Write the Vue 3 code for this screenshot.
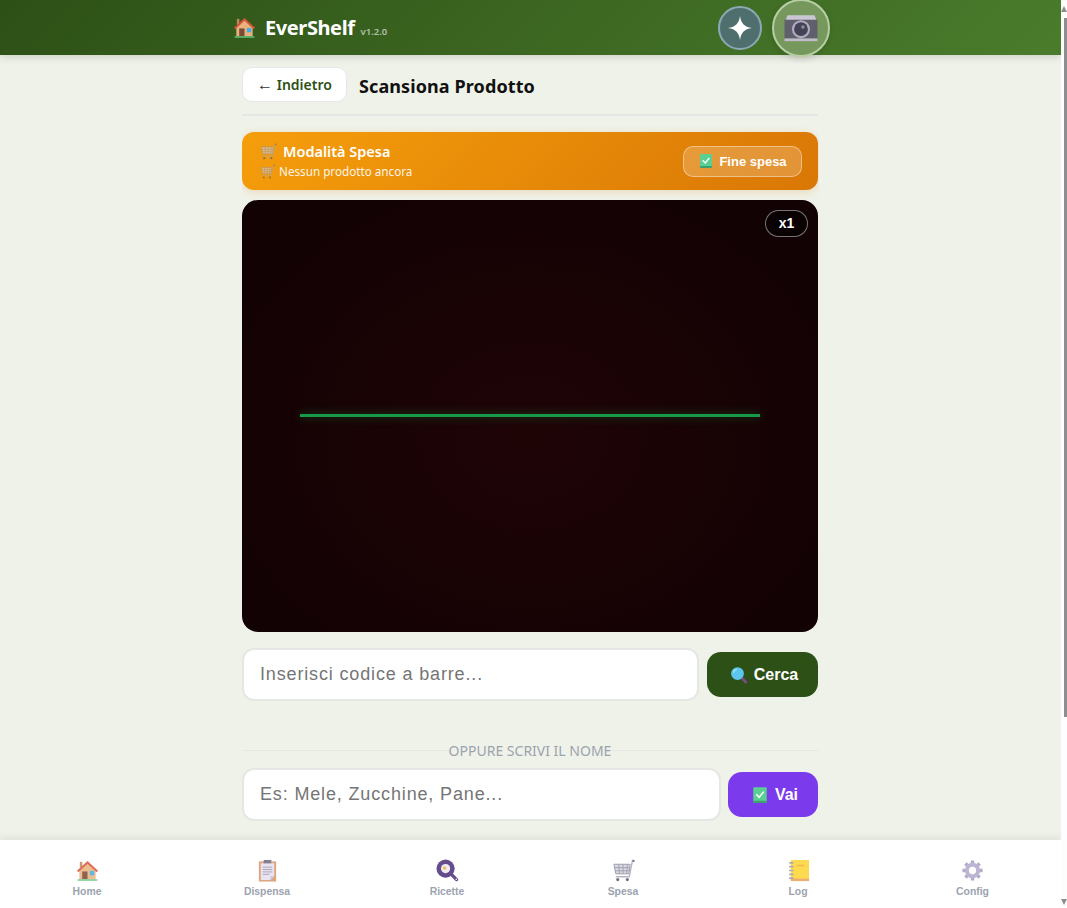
<template>
  <div class="shell">
    <!-- icon sprite -->
    <svg class="sprite" aria-hidden="true">
      <symbol id="i-house" viewBox="0 0 24 24">
        <rect x="4" y="3" width="2.6" height="6" fill="#b98a5e" />
        <path d="M3.500 11.500 12 4l8.500 7.500V21h-17z" fill="#e8b27c" />
        <path d="M1 12.200 12 2l11 10.200-1.500 1.500L12 5 2.500 13.700z" fill="#d9553a" />
        <rect x="6.500" y="13" width="5.500" height="8" fill="#7a4a35" />
        <rect x="14.500" y="12.500" width="4.500" height="4.500" fill="#45a9e6" />
        <rect x="1.500" y="21" width="21" height="1.600" rx=".8" fill="#5cc27a" />
      </symbol>
      <symbol id="i-cart" viewBox="0 0 24 24">
        <path d="M2 5.500h17l-1.400 10H4z" fill="#d3d3dc" stroke="#8d8da0" stroke-width="1" />
        <path d="M2.500 9h16M3 12.300h15M7 5.500 7.800 15.500M11.500 5.500v10M16 5.500l-.8 10" stroke="#8d8da0" stroke-width=".9" fill="none" />
        <path d="M23 1.500h-1.600L18 18.500H4" stroke="#a9a9b8" stroke-width="1.400" fill="none" />
        <rect x="21.500" y="1" width="2" height="2" fill="#55558a" />
        <circle cx="6" cy="21.500" r="1.600" fill="#55556a" />
        <circle cx="16" cy="21.500" r="1.600" fill="#55556a" />
      </symbol>
      <symbol id="i-check" viewBox="0 0 24 24">
        <rect x="3" y="1.500" width="18" height="21" rx="1.500" fill="#59cf92" />
        <path d="M3 19.500h18v1.500a1.500 1.500 0 0 1-1.500 1.500h-15A1.500 1.500 0 0 1 3 21z" fill="#3f9f70" />
        <path d="m7 11 3.800 4 6.200-7.500" stroke="#fff" stroke-width="2" fill="none" />
      </symbol>
      <symbol id="i-search" viewBox="0 0 24 24">
        <path d="m15 15 6 6.500" stroke="#7d4a8a" stroke-width="3.600" stroke-linecap="round" />
        <circle cx="10" cy="10" r="8.500" fill="#5cc6ee" />
        <path d="M4.500 9A6 6 0 0 1 9 4.500" stroke="#a9e6fa" stroke-width="1.500" fill="none" />
      </symbol>
      <symbol id="i-camera" viewBox="0 0 24 24">
        <path d="M2 6 3 3.500h18L22 6v1H2z" fill="#d5cce0" />
        <rect x="1" y="6.500" width="22" height="12.500" fill="#5d5a6e" />
        <rect x="1" y="19" width="22" height="1.800" fill="#c9bfd8" />
        <circle cx="12" cy="12.800" r="6" fill="#b9aece" />
        <circle cx="12" cy="12.800" r="4.600" fill="#3f3a55" />
        <circle cx="13.300" cy="11.300" r="1.200" fill="#8e87a8" />
      </symbol>
      <symbol id="i-clip" viewBox="0 0 24 24">
        <rect x="3" y="2.500" width="18" height="21" fill="#d8966a" />
        <path d="M5 4.500h14V18l-4 4H5z" fill="#e6e0f0" />
        <path d="M19 18h-4v4z" fill="#c8bcd8" />
        <path d="M8 1h8v3.500H8z" fill="#6e6a80" />
        <path d="M7 8.500h10M7 11h10M7 13.500h10M7 16h7" stroke="#9a94ae" stroke-width="1" />
      </symbol>
      <symbol id="i-pan" viewBox="0 0 24 24">
        <path d="m15 15 6.500 6.500" stroke="#4b2f7a" stroke-width="3.400" stroke-linecap="round" />
        <circle cx="10" cy="10" r="9.500" fill="#4b2f7a" />
        <circle cx="10" cy="10" r="4.800" fill="#efeaf2" />
        <circle cx="9" cy="9.500" r="1.900" fill="#f4b942" />
        <circle cx="21.200" cy="21.200" r=".8" fill="#fff" />
      </symbol>
      <symbol id="i-note" viewBox="0 0 24 24">
        <rect x="4" y="1" width="19" height="22" fill="#fdd431" />
        <rect x="4" y="20.500" width="19" height="2.500" fill="#e8a05a" />
        <rect x="10" y="6" width="8" height="1.500" fill="#f3a73a" />
        <path d="M3 4h3M3 8h3M3 12h3M3 16h3M3 20h3" stroke="#9a9aac" stroke-width="1.800" stroke-linecap="round" />
      </symbol>
      <symbol id="i-gear" viewBox="0 0 24 24">
        <path d="M12 1.500v21M1.500 12h21M4.600 4.600l14.800 14.800M19.400 4.600 4.600 19.400" stroke="#a89dc4" stroke-width="3.600" />
        <circle cx="12" cy="12" r="8" fill="#b3a9cb" />
        <circle cx="12" cy="12" r="3.800" fill="#fff" />
      </symbol>
      <symbol id="i-star" viewBox="0 0 24 24">
        <path d="M12 0c1 7 4 11 12 12-8 1-11 5-12 12-1-7-4-11-12-12C8 11 11 7 12 0z" fill="#fff" />
      </symbol>
    </svg>

    <div class="page">
      <header class="topbar">
        <div class="topbar-inner">
          <div class="brand">
            <svg class="brand-icon"><use href="#i-house" /></svg>
            <span class="brand-name">EverShelf</span>
            <span class="brand-version">v1.2.0</span>
          </div>
          <div class="top-actions">
            <button class="btn-ai"><svg class="star"><use href="#i-star" /></svg></button>
            <button class="btn-cam"><svg class="cam"><use href="#i-camera" /></svg></button>
          </div>
        </div>
      </header>

      <main class="content">
        <div class="title-row">
          <button class="btn-back"><span class="arrow">←</span> Indietro</button>
          <h1 class="title">Scansiona Prodotto</h1>
        </div>

        <!-- Shopping mode banner -->
        <div class="banner">
          <div class="banner-text">
            <div class="banner-title"><svg class="banner-cart"><use href="#i-cart" /></svg> Modalità Spesa</div>
            <div class="banner-sub"><svg class="banner-cart small"><use href="#i-cart" /></svg> Nessun prodotto ancora</div>
          </div>
          <button class="btn-finish"><svg class="check"><use href="#i-check" /></svg> Fine spesa</button>
        </div>

        <div class="scanner">
          <span class="zoom-badge">x1</span>
          <div class="scan-line"></div>
        </div>

        <div class="input-row">
          <input class="field" type="text" placeholder="Inserisci codice a barre..." />
          <button class="btn-go btn-search"><svg class="check"><use href="#i-search" /></svg> Cerca</button>
        </div>

        <div class="divider"><span>OPPURE SCRIVI IL NOME</span></div>

        <div class="input-row name-row">
          <input class="field" type="text" placeholder="Es: Mele, Zucchine, Pane..." />
          <button class="btn-go btn-vai"><svg class="check"><use href="#i-check" /></svg> Vai</button>
        </div>
      </main>

      <nav class="tabbar">
        <a v-for="tab in tabs" :key="tab.label" class="tab">
          <svg class="tab-icon"><use :href="'#' + tab.icon" /></svg>
          <span>{{ tab.label }}</span>
        </a>
      </nav>
    </div>

    <!-- page scrollbar -->
    <div class="rail">
      <i class="rail-up"></i>
      <div class="rail-thumb"></div>
      <i class="rail-down"></i>
    </div>
  </div>
</template>

<script setup>
const tabs = [
  { label: 'Home', icon: 'i-house' },
  { label: 'Dispensa', icon: 'i-clip' },
  { label: 'Ricette', icon: 'i-pan' },
  { label: 'Spesa', icon: 'i-cart' },
  { label: 'Log', icon: 'i-note' },
  { label: 'Config', icon: 'i-gear' }
]
</script>

<style>
html, body {
  margin: 0;
  height: 100%;
  overflow: hidden;
}
input::placeholder {
  color: #757575;
  opacity: 1;
}
</style>

<style scoped>
.shell {
  display: flex;
  height: 100vh;
  background: #fff;
  font-family: "Noto Sans", "Open Sans", sans-serif;
}
.sprite {
  display: none;
}
.page {
  flex: 1;
  min-width: 0;
  display: flex;
  flex-direction: column;
  background: #eff2e8;
  overflow: hidden;
}

/* header */
.topbar {
  height: 55px;
  flex: none;
  background: linear-gradient(135deg, #2d5016, #4a7c2c);
  box-shadow: 0 2px 8px rgba(0, 0, 0, 0.15);
  position: relative;
  z-index: 2;
}
.topbar-inner {
  width: 600px;
  height: 100%;
  margin: 0 auto;
  padding-right: 1px;
  display: flex;
  align-items: center;
  justify-content: space-between;
}
.brand {
  display: flex;
  align-items: center;
  margin-left: 3px;
  color: #fff;
}
.brand-icon {
  width: 23px;
  height: 23px;
  margin-right: 9px;
}
.brand-name {
  font-size: 20px;
  font-weight: 700;
  letter-spacing: -0.4px;
}
.brand-version {
  font-size: 9.500px;
  font-weight: 600;
  margin: 7px 0 0 6px;
  opacity: 0.6;
}
.top-actions {
  display: flex;
  align-items: center;
  gap: 10px;
}
.btn-ai,
.btn-cam {
  padding: 0;
  border-radius: 50%;
  display: flex;
  align-items: center;
  justify-content: center;
  box-sizing: border-box;
}
.btn-ai {
  width: 44px;
  height: 44px;
  background: #4f6f6e;
  border: 2px solid #8fa8b8;
}
.star {
  width: 24px;
  height: 24px;
}
.btn-cam {
  width: 58px;
  height: 58px;
  background: #76985c;
  border: 2px solid #b5cfa3;
  box-shadow: 0 2px 6px rgba(0, 0, 0, 0.15);
}
.cam {
  width: 36px;
  height: 36px;
  opacity: 0.9;
}

/* content */
.content {
  flex: 1;
  width: 576px;
  margin: 0 auto;
  padding: 12px 1px 0 0;
  overflow: hidden;
}
.title-row {
  display: flex;
  align-items: center;
  gap: 12px;
  padding-bottom: 12px;
  border-bottom: 2px solid #e5e7e5;
}
.btn-back {
  width: 105px;
  height: 35px;
  padding: 0;
  border: 1px solid #e5e7eb;
  border-radius: 10px;
  background: #fff;
  color: #2d5016;
  font-family: inherit;
  font-size: 14px;
  font-weight: 600;
}
.arrow {
  color: #333;
  font-family: "Liberation Sans", sans-serif;
  font-size: 16px;
  font-weight: 400;
}
.title {
  margin: 2px 0 0;
  font-size: 18px;
  font-weight: 700;
  color: #111;
  letter-spacing: 0.1px;
}

.banner {
  height: 58px;
  margin-top: 16px;
  padding: 0 16px 2px 18px;
  box-sizing: border-box;
  display: flex;
  align-items: center;
  justify-content: space-between;
  border-radius: 12px;
  background: linear-gradient(135deg, #f59e0b, #d97706);
  box-shadow: 0 2px 8px rgba(217, 119, 6, 0.2);
  color: #fff;
}
.banner-title {
  font-size: 14.500px;
  font-weight: 600;
  display: flex;
  align-items: center;
  gap: 6px;
}
.banner-sub {
  margin-top: 2px;
  font-size: 11.700px;
  display: flex;
  align-items: center;
  gap: 4px;
  opacity: 0.9;
}
.banner-cart {
  width: 17px;
  height: 17px;
  opacity: 0.6;
}
.banner-cart.small {
  width: 15px;
  height: 15px;
}
.btn-finish {
  width: 119px;
  height: 31px;
  margin-top: 2px;
  padding: 0;
  display: flex;
  align-items: center;
  justify-content: center;
  gap: 5px;
  border: 1px solid rgba(255, 255, 255, 0.4);
  border-radius: 10px;
  background: rgba(255, 255, 255, 0.2);
  color: #fff;
  font-family: "Liberation Sans", sans-serif;
  font-size: 13px;
  font-weight: 700;
}
.check {
  width: 16px;
  height: 16px;
}

/* scanner */
.scanner {
  height: 432px;
  margin-top: 10px;
  border-radius: 16px;
  position: relative;
  display: flex;
  align-items: center;
  justify-content: center;
  background: radial-gradient(ellipse at 50% 55%, #1f0406, #130204 80%);
}
.zoom-badge {
  position: absolute;
  top: 10px;
  right: 10px;
  width: 43px;
  height: 27px;
  padding-bottom: 2px;
  box-sizing: border-box;
  display: flex;
  align-items: center;
  justify-content: center;
  border: 1px solid rgba(255, 255, 255, 0.45);
  border-radius: 14px;
  background: rgba(0, 0, 0, 0.5);
  color: #fff;
  font-family: "Liberation Sans", sans-serif;
  font-size: 14px;
  font-weight: 700;
}
.scan-line {
  width: 80%;
  height: 3px;
  margin-bottom: 2px;
  background: #169a4a;
  box-shadow: 0 0 10px rgba(22, 163, 74, 0.5);
}

/* inputs */
.input-row {
  display: flex;
  align-items: center;
  gap: 8px;
  margin-top: 16px;
}
.name-row {
  gap: 7px;
  margin-top: 9px;
}
.field {
  flex: 1;
  min-width: 0;
  height: 53px;
  box-sizing: border-box;
  padding: 0 16px;
  border: 2px solid #e5e7e5;
  border-radius: 12px;
  background: #fff;
  font-family: "Liberation Sans", sans-serif;
  font-size: 18px;
  letter-spacing: 0.85px;
  outline: none;
}
.btn-go {
  height: 45px;
  flex: none;
  padding: 0 0 0 3px;
  display: flex;
  align-items: center;
  justify-content: center;
  gap: 6px;
  border: none;
  border-radius: 14px;
  color: #fff;
  font-family: "Liberation Sans", sans-serif;
  font-size: 16px;
  font-weight: 700;
}
.btn-go .check {
  width: 18px;
  height: 18px;
}
.btn-search {
  width: 111px;
  background: #2d5016;
}
.btn-vai {
  width: 90px;
  background: #7c3aed;
}
.divider {
  margin-top: 41px;
  display: flex;
  align-items: center;
  height: 17px;
  color: #9ca3af;
  font-size: 14px;
}
.divider::before,
.divider::after {
  content: "";
  flex: 1;
  height: 1px;
  background: #e5e7e5;
}

/* bottom nav */
.tabbar {
  height: 68px;
  flex: none;
  box-sizing: border-box;
  display: grid;
  grid-template-columns: 174px 186px 174px 178px 172px 177px;
  padding-top: 19px;
  background: #fff;
  box-shadow: 0 -2px 8px rgba(0, 0, 0, 0.08);
  position: relative;
}
.tab {
  display: flex;
  flex-direction: column;
  align-items: center;
  gap: 4px;
  color: #9ca3af;
  font-family: "Liberation Sans", sans-serif;
  font-size: 10.400px;
  font-weight: 700;
}
.tab-icon {
  width: 23px;
  height: 23px;
  opacity: 0.85;
}

/* scrollbar */
.rail {
  width: 6px;
  flex: none;
  display: flex;
  flex-direction: column;
  align-items: flex-end;
  background: #fdfdfd;
}
.rail-thumb {
  width: 3px;
  height: 699px;
  margin-top: 6px;
  background: #8e8e8e;
}
.rail-up,
.rail-down {
  width: 0;
  height: 0;
  border-left: 3px solid transparent;
  border-right: 3px solid transparent;
}
.rail-up {
  margin-top: 6px;
  border-bottom: 6px solid #8e8e8e;
}
.rail-down {
  margin-top: auto;
  margin-bottom: 3px;
  border-top: 6px solid #8e8e8e;
}
</style>
